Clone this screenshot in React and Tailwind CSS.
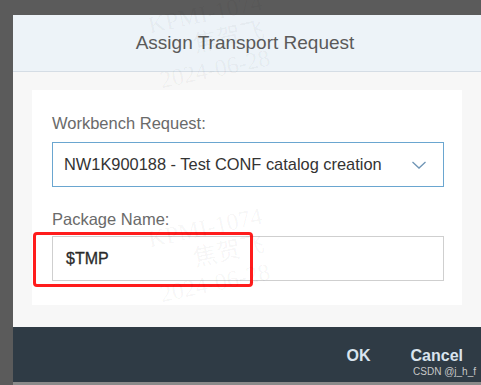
import React from 'react';

const Watermark = ({ className }) => (
    <div className={"absolute pointer-events-none select-none text-black/[0.045] font-['Liberation_Serif','Noto_Sans_CJK_SC',serif] leading-[28px] text-[24px] -rotate-[12deg] " + className}>
        <div>KPMI-1074</div>
        <div className="pl-[40px]">焦贺飞</div>
        <div>2024-06-28</div>
    </div>
);

export default function App() {
    return (
        <div className="w-[481px] h-[385px] overflow-hidden bg-[#5b5b5b] pl-[13px] pt-[15px] font-['Liberation_Sans',Arial,sans-serif]">
            <div className="relative w-[468px] h-[370px] flex flex-col">
                {/* Header */}
                <div className="h-[57px] shrink-0 bg-[#edf3f8] border-b border-[#d5dde5] flex items-center justify-center">
                    <span className="text-[19px] text-[#5a5a5a] pr-[4px]">Assign Transport Request</span>
                </div>

                {/* Content */}
                <div className="flex-1 bg-[#f7f7f7] pt-[18px] pb-[22px] pl-[19px] pr-[19px]">
                    <div className="h-full bg-white pt-[23px] pl-[20px] pr-[18px]">
                        <div className="text-[16.5px] leading-[20px] text-[#6a6a6a]">Workbench Request:</div>
                        <div className="mt-[9px] h-[45px] border border-[#6aa6d0] flex items-center pl-[11px] pr-[16px]">
                            <span className="flex-1 text-[16.4px] text-[#333]">NW1K900188 - Test CONF catalog creation</span>
                            <svg width="16" height="10" viewBox="0 0 16 10" fill="none" stroke="#6f95b5" strokeWidth="1.3">
                                <path d="M1.5 2 L8 8 L14.5 2" />
                            </svg>
                        </div>
                        <div className="mt-[22px] text-[16.5px] leading-[20px] text-[#6a6a6a]">Package Name:</div>
                        <div className="relative mt-[7px]">
                            <div className="h-[45px] border border-[#cfcfcf] flex items-center pl-[13px]">
                                <span className="text-[16px] text-[#2a2a2a] [-webkit-text-stroke:0.3px_#2a2a2a]">$TMP</span>
                            </div>
                            <div className="absolute left-[-19px] top-[-4px] w-[220px] h-[55px] border-[3px] border-[#ff1c1c] rounded-[4px]" />
                        </div>
                    </div>
                </div>

                {/* Footer */}
                <div className="h-[58px] shrink-0 bg-[#2f3b45] border-b-[3px] border-[#8a8a8a] relative flex items-start justify-end pt-[17px] pr-[18px] gap-[40px]">
                    <span className="text-[16px] font-bold text-[#d9e4ee]">OK</span>
                    <span className="text-[16px] font-bold text-[#d9e4ee]">Cancel</span>
                    <span className="absolute right-[5px] bottom-[3px] text-[10px] text-[#c8c8c8]">CSDN @j_h_f</span>
                </div>

                <Watermark className="left-[140px] top-[-16px]" />
                <Watermark className="left-[140px] top-[198px]" />
            </div>
        </div>
    );
}
